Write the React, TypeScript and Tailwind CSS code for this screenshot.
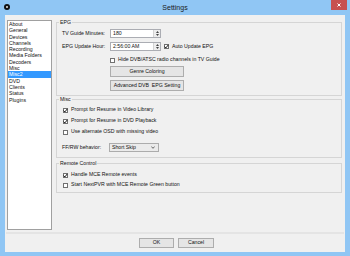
import React from "react";

const menu = ["About", "General", "Devices", "Channels", "Recording", "Media Folders", "Decoders", "Misc", "Misc2", "DVD", "Clients", "Status", "Plugins"];

// small win8 style checkbox
function CheckBox({ checked }: { checked?: boolean }) {
  return (
    <span className="w-[5px] h-[5px] shrink-0 border border-[#707070] bg-white flex items-center justify-center">
      {checked && (
        <svg width="5" height="5" viewBox="0 0 5 5" className="overflow-visible">
          <path d="M0.6 2.6 L1.9 3.9 L4.3 0.9" fill="none" stroke="#1a1a1a" strokeWidth="1" />
        </svg>
      )}
    </span>
  );
}

function CheckRow({ label, checked, className }: { label: string; checked?: boolean; className?: string }) {
  return (
    <div className={`flex items-center h-[6px] ${className ?? ""}`}>
      <CheckBox checked={checked} />
      <span className="ml-[3px] whitespace-nowrap">{label}</span>
    </div>
  );
}

function SpinInput({ value }: { value: string }) {
  return (
    <div className="flex w-[51px] h-[9px] border border-[#abadb3] bg-white">
      <span className="flex-1 pl-[2px] leading-[7px]">{value}</span>
      <span className="w-[7px] border-l border-[#d4d4d4] bg-[#ededed] flex flex-col items-center justify-center gap-[1px]">
        <svg width="3" height="2" viewBox="0 0 3 2"><path d="M0 2 L1.5 0 L3 2 Z" fill="#444" /></svg>
        <svg width="3" height="2" viewBox="0 0 3 2"><path d="M0 0 L1.5 2 L3 0 Z" fill="#444" /></svg>
      </span>
    </div>
  );
}

function Button({ children, className }: { children: React.ReactNode; className?: string }) {
  return (
    <div className={`border border-[#adadad] bg-[#e5e5e5] flex items-center justify-center whitespace-pre ${className ?? ""}`}>
      {children}
    </div>
  );
}

export default function App() {
  return (
    <div className="w-[350px] h-[256px] bg-[#90c6f4] flex flex-col font-['Liberation_Sans',Arial,sans-serif] text-[5.2px] text-[#111] leading-none">
      {/* title bar */}
      <div className="h-[15px] grid grid-cols-[1fr_auto_1fr] items-start">
        <div className="pl-[4px] pt-[4px]">
          <svg width="6" height="6" viewBox="0 0 6 6">
            <circle cx="3" cy="3" r="3" fill="#111" />
            <circle cx="3" cy="3" r="1" fill="#e8e8e8" />
          </svg>
        </div>
        <div className="h-[15px] flex items-center text-[7px] text-[#1b1b1b]">Settings</div>
        <div className="flex justify-end pr-[3px]">
          <div className="w-[16px] h-[10px] bg-[#c75050] flex items-center justify-center">
            <svg width="4" height="4" viewBox="0 0 4 4">
              <path d="M0.5 0.5 L3.5 3.5 M3.5 0.5 L0.5 3.5" stroke="#fff" strokeWidth="1" />
            </svg>
          </div>
        </div>
      </div>

      {/* client area */}
      <div className="mx-[5px] h-[237px] bg-[#f0f0f0] flex flex-col">
        <div className="flex pt-[4px] pl-[2px] pr-[3px]">
          <ul className="mt-[1px] w-[45px] h-[210px] border border-[#a0a0a0] bg-white">
            {menu.map((m) => (
              <li
                key={m}
                className={`h-[6.3px] leading-[6.3px] pl-[1px] whitespace-nowrap ${m === "Misc2" ? "bg-[#3399ff] text-white" : ""}`}
              >
                {m}
              </li>
            ))}
          </ul>

          <div className="ml-[4px] flex-1 flex flex-col">
            {/* EPG */}
            <fieldset className="h-[77px] border border-[#d5d5d5] min-w-0">
              <legend className="ml-[2px] px-[1px] leading-[6px]">EPG</legend>
              <div className="pl-[5px] flex flex-col">
                <div className="mt-[4px] h-[9px] flex items-center">
                  <span className="w-[48px]">TV Guide Minutes:</span>
                  <SpinInput value="180" />
                </div>
                <div className="mt-[4px] h-[9px] flex items-center">
                  <span className="w-[48px]">EPG Update Hour:</span>
                  <SpinInput value="2:56:00 AM" />
                  <CheckRow className="ml-[3px]" label="Auto Update EPG" checked />
                </div>
                <CheckRow className="mt-[6px] ml-[48px]" label="Hide DVB/ATSC radio channels in TV Guide" />
                <Button className="mt-[3px] ml-[48px] w-[74px] h-[11px]">Genre Coloring</Button>
                <Button className="mt-[3px] ml-[48px] w-[74px] h-[11px]">Advanced DVB  EPG Setting</Button>
              </div>
            </fieldset>

            {/* Misc */}
            <fieldset className="h-[62px] border border-[#d5d5d5] min-w-0">
              <legend className="ml-[2px] px-[1px] leading-[6px]">Misc</legend>
              <div className="pl-[5px] flex flex-col">
                <CheckRow className="mt-[5px] ml-[1px]" label="Prompt for Resume in Video Library" checked />
                <CheckRow className="mt-[5px] ml-[1px]" label="Prompt for Resume in DVD Playback" checked />
                <CheckRow className="mt-[5px] ml-[1px]" label="Use alternate OSD with missing video" />
                <div className="mt-[8px] h-[9px] flex items-center">
                  <span className="w-[47px]">FF/RW behavior:</span>
                  <div className="w-[50px] h-[9px] border border-[#acacac] bg-[#ebebeb] flex items-center justify-between pl-[2px] pr-[3px]">
                    <span>Short Skip</span>
                    <svg width="4" height="3" viewBox="0 0 4 3">
                      <path d="M0.3 0.5 L2 2.3 L3.7 0.5" fill="none" stroke="#444" strokeWidth="0.8" />
                    </svg>
                  </div>
                </div>
              </div>
            </fieldset>

            {/* Remote Control */}
            <fieldset className="mt-[2px] h-[33px] border border-[#d5d5d5] min-w-0">
              <legend className="ml-[2px] px-[1px] leading-[6px]">Remote Control</legend>
              <div className="pl-[6px] flex flex-col">
                <CheckRow className="mt-[6px]" label="Handle MCE Remote events" checked />
                <CheckRow className="mt-[4px]" label="Start NextPVR with MCE Remote Green button" />
              </div>
            </fieldset>
          </div>
        </div>

        <div className="mx-[1px] mt-[2px] h-[2px] bg-[#e4e4e4]" />

        <div className="mt-[4px] flex justify-center gap-[4px] pl-[3px]">
          <Button className="w-[35px] h-[10px]">OK</Button>
          <Button className="w-[36px] h-[10px]">Cancel</Button>
        </div>
      </div>
    </div>
  );
}
